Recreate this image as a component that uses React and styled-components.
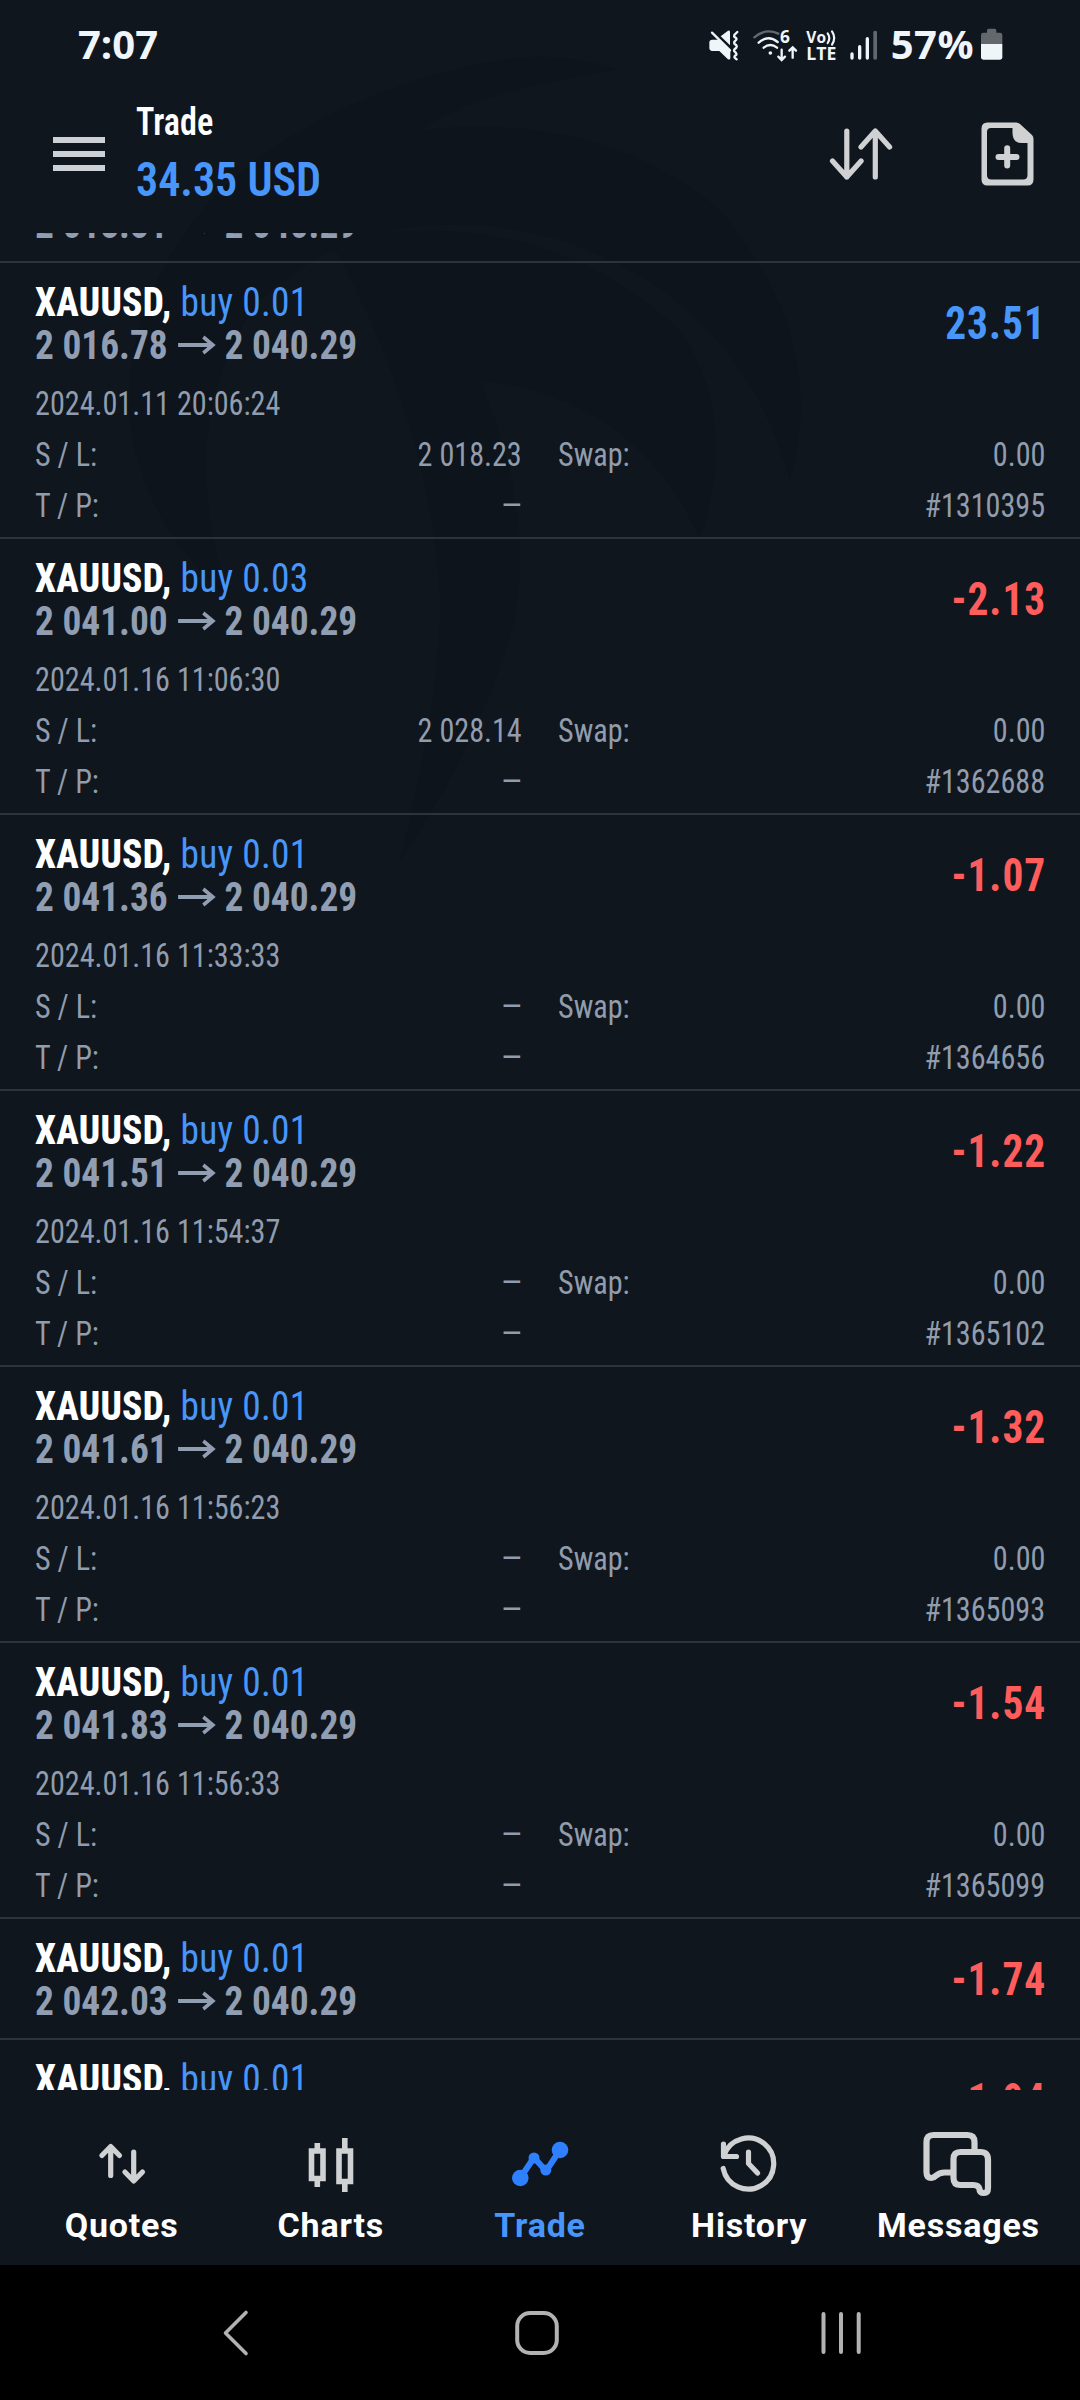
import React from 'react';
import styled, { createGlobalStyle } from 'styled-components';

const GlobalStyle = createGlobalStyle`
    * {
        box-sizing: border-box;
    }
    body {
        margin: 0;
        background: #0f161e;
    }
    svg {
        display: block;
        flex: none;
        overflow: visible;
    }
`;

const Screen = styled.div`
    position: relative;
    display: flex;
    flex-direction: column;
    width: 1080px;
    height: 2400px;
    overflow: hidden;
    background: #0f161e;
    color: #fff;
    font-family: Roboto, sans-serif;
    font-stretch: 75%;
`;

const Watermark = styled.svg`
    position: absolute;
    left: 0;
    top: 0;
    fill: #0b1118;
    opacity: 0.3;
`;

const StatusBar = styled.div`
    position: relative;
    display: flex;
    align-items: flex-start;
    height: 88px;
    padding: 27px 77px 0 78px;
    color: #f0f5fa;
    font-family: 'Open Sans', sans-serif;
    font-stretch: 100%;
`;

const StatusText = styled.div`
    font-size: 40px;
    font-weight: 700;
    line-height: 34px;
    letter-spacing: ${(p) => p.$spacing || 0}px;
`;

const StatusIcons = styled.div`
    display: flex;
    margin-left: auto;
`;

const Gap = styled.div`
    width: ${(p) => p.$w}px;
`;

const AppBar = styled.div`
    position: relative;
    display: flex;
    align-items: center;
    height: 132px;
    margin-bottom: 13px;
    padding: 0 46px 0 53px;
`;

const Burger = styled.div`
    display: grid;
    gap: 8px;
    width: 52px;
    margin-right: 31px;
`;

const BurgerLine = styled.div`
    height: 6px;
    background: #cdd0d4;
`;

const Titles = styled.div`
    flex: 1;
`;

const Narrow = styled.div`
    display: flex;
    align-items: center;
    white-space: pre;
    transform: scaleX(0.9);
    transform-origin: ${(p) => (p.$right ? 'right' : 'left')} center;
`;

const Title = styled(Narrow)`
    font-size: 38px;
    font-weight: 600;
    line-height: 45px;
    margin-bottom: 6px;
`;

const Balance = styled(Narrow)`
    color: #4996fb;
    font-size: 49px;
    font-weight: 600;
    line-height: 58px;
`;

const Actions = styled.div`
    display: flex;
    align-items: center;
    gap: 88px;
`;

const List = styled.div`
    position: relative;
    height: 1857px;
    overflow: hidden;
`;

const ListInner = styled.div`
    margin-top: -93px;
`;

const Row = styled.div`
    height: ${(p) => (p.$open ? 276 : 121)}px;
    border-top: 2px solid #2b333d;
    padding: 17px 35px 0;
`;

const RowHead = styled.div`
    display: flex;
    justify-content: space-between;
    height: 86px;
`;

const Symbol = styled(Narrow)`
    font-size: 41.5px;
    font-weight: 800;
    line-height: 43px;
    letter-spacing: 0.3px;
`;

const Side = styled.span`
    color: #4996fb;
    font-weight: 430;
`;

const Prices = styled(Symbol)`
    color: #919db1;
    font-weight: 700;
    letter-spacing: 0;
`;

const PriceArrow = styled.svg`
    margin: 0 10px 0 12px;
`;

const Profit = styled(Narrow)`
    height: 54px;
    margin: 16px -1px 0 0;
    color: ${(p) => (p.$loss ? '#ff5c5c' : '#4996fb')};
    font-size: 46px;
    font-weight: 700;
    line-height: 54px;
    letter-spacing: 1.1px;
`;

const Details = styled.div`
    display: grid;
    grid-template-columns: 487px 1fr;
    column-gap: 36px;
    margin-top: 12px;
    color: #919cad;
    font-size: 33.5px;
    line-height: 51px;
`;

const Cell = styled.div`
    display: flex;
    justify-content: ${(p) => (p.$end ? 'flex-end' : 'space-between')};
    height: 51px;
`;

const DateCell = styled(Cell)`
    grid-column: 1 / -1;
`;

const Tabs = styled.div`
    position: relative;
    display: grid;
    grid-template-columns: repeat(5, 1fr);
    height: 175px;
    padding: 39px 17px 0;
`;

const Tab = styled.div`
    display: flex;
    flex-direction: column;
    align-items: center;
    color: ${(p) => (p.$active ? '#4996fb' : '#fff')};
    font-size: 34px;
    font-weight: 700;
    font-stretch: 100%;
    line-height: 40px;
    letter-spacing: 0.8px;

    svg {
        margin-bottom: 6px;
    }
`;

const SystemNav = styled.div`
    position: relative;
    display: flex;
    align-items: center;
    height: 135px;
    padding: 0 219px;
    justify-content: space-between;
    background: #000;
`;

const trades = [
    { lot: '0.01', open: '2 018.51', profit: '21.78' },
    { lot: '0.01', open: '2 016.78', profit: '23.51', date: '2024.01.11 20:06:24', sl: '2 018.23', id: '#1310395' },
    { lot: '0.03', open: '2 041.00', profit: '-2.13', date: '2024.01.16 11:06:30', sl: '2 028.14', id: '#1362688' },
    { lot: '0.01', open: '2 041.36', profit: '-1.07', date: '2024.01.16 11:33:33', sl: '—', id: '#1364656' },
    { lot: '0.01', open: '2 041.51', profit: '-1.22', date: '2024.01.16 11:54:37', sl: '—', id: '#1365102' },
    { lot: '0.01', open: '2 041.61', profit: '-1.32', date: '2024.01.16 11:56:23', sl: '—', id: '#1365093' },
    { lot: '0.01', open: '2 041.83', profit: '-1.54', date: '2024.01.16 11:56:33', sl: '—', id: '#1365099' },
    { lot: '0.01', open: '2 042.03', profit: '-1.74' },
    { lot: '0.01', open: '2 042.23', profit: '-1.94' },
];

function Arrow() {
    return (
        <PriceArrow width="41" height="20" viewBox="0 0 41 20" fill="none" stroke="#919db1" strokeWidth="4">
            <path d="M0 10h38M28 2l10.500 8-10.500 8" />
        </PriceArrow>
    );
}

function Trade({ trade }) {
    return (
        <Row $open={!!trade.date}>
            <RowHead>
                <div>
                    <Symbol>XAUUSD, <Side>buy {trade.lot}</Side></Symbol>
                    <Prices>{trade.open}<Arrow />2 040.29</Prices>
                </div>
                <Profit $right $loss={trade.profit[0] === '-'}>{trade.profit}</Profit>
            </RowHead>
            {trade.date && (
                <Details>
                    <DateCell><Narrow>{trade.date}</Narrow></DateCell>
                    <Cell><Narrow>S / L:</Narrow><Narrow $right>{trade.sl}</Narrow></Cell>
                    <Cell><Narrow>Swap:</Narrow><Narrow $right>0.00</Narrow></Cell>
                    <Cell><Narrow>T / P:</Narrow><Narrow $right>—</Narrow></Cell>
                    <Cell $end><Narrow $right>{trade.id}</Narrow></Cell>
                </Details>
            )}
        </Row>
    );
}

function StatusGlyphs() {
    return (
        <>
            <svg width="32" height="35" viewBox="84 50 96 105" fill="currentColor">
                <path d="M122 78l22-17q6-2 6 4v40z" />
                <path d="M96 67l54 53" stroke="currentColor" strokeWidth="7" strokeLinecap="round" />
                <path d="M97 88h20l34 33v23q-1 6-8 2l-25-24H95q-7-1-7-8v-18q0-8 9-8z" />
                <path d="M172 65l-9 9q-2 4 2 7 8 4 2 9-7 5-3 11 9 5 5 11-9 6-6 11 8 6 6 10-8 5-5 9l6 5" fill="none" stroke="currentColor" strokeWidth="7" strokeLinecap="round" />
            </svg>
            <Gap $w={12} />
            <svg width="47" height="35" viewBox="216 50 141 105" fill="none" stroke="currentColor" strokeWidth="7" strokeLinecap="round">
                <path d="M223 81q34-29 72-11" stroke="#63686d" />
                <path d="M236 97q28-25 57-2M251 112q20-16 40 0" />
                <circle cx="271" cy="128" r="5.500" fill="currentColor" stroke="none" />
                <path d="M305 118v30M295 139l10 10 10-10M338 142v-28M328 121l10-10 10 10" strokeWidth="7" />
                <text x="300" y="97" fontSize="52" fontWeight="700" fill="currentColor" stroke="none">6</text>
            </svg>
            <Gap $w={7} />
            <svg width="31" height="35" viewBox="378 50 93 105" fill="currentColor" fontWeight="700">
                <text x="379" y="98" fontSize="48" textLength="59" lengthAdjust="spacingAndGlyphs">Vo</text>
                <text x="379" y="150" fontSize="52" textLength="90" lengthAdjust="spacingAndGlyphs">LTE</text>
                <path d="M443 69q10 14 0 29M456 63q13 19 0 40" fill="none" stroke="currentColor" strokeWidth="6.500" strokeLinecap="round" />
            </svg>
            <Gap $w={12} />
            <svg width="29" height="35" viewBox="507 50 87 105" fill="currentColor">
                <rect x="511" y="126" width="10" height="22" rx="5" />
                <rect x="534" y="104" width="10" height="44" rx="5" />
                <rect x="557" y="80" width="10" height="68" rx="5" />
                <rect x="580" y="61" width="11" height="87" rx="5" fill="#63686d" />
            </svg>
        </>
    );
}

function Battery() {
    return (
        <svg width="23" height="35" viewBox="900 50 69 105" fill="currentColor">
            <path d="M903 101V74q0-7 7-7h11V60q0-5 5-5h18q5 0 5 5v7h11q7 0 7 7v27z" fill="#63686d" />
            <path d="M903 101h64v40q0 7-7 7H910q-7 0-7-7z" />
        </svg>
    );
}

function SortIcon() {
    return (
        <svg width="64" height="58" viewBox="829 125 64 58" fill="none" stroke="#cfd1d3" strokeWidth="5.2" strokeLinecap="round" strokeLinejoin="round">
            <path d="M846.800 131v46M832.500 161l14.300 16 14.300-16M875.300 177v-46M861 147l14.300-16 14.300 16" />
        </svg>
    );
}

function NewOrderIcon() {
    return (
        <svg width="53" height="64" viewBox="981 122 53 64">
            <path fillRule="evenodd" fill="#cfd1d3" d="M987.500 122.500H1016Q1018.500 122.500 1020 124L1032 135Q1033.500 136.500 1033.500 139V179.500Q1033.500 185.500 1027.500 185.500H987.500Q981.500 185.500 981.500 179.500V128.500Q981.500 122.500 987.500 122.500ZM991 128Q987 128 987 132V175Q987 179.500 991.500 179.500H1023Q1027.500 179.500 1027.500 175V143H1022Q1012.500 143 1012.500 133V128Z" />
            <path d="M998.500 157h18M1007.200 148.300v17.200" stroke="#cfd1d3" strokeWidth="6" strokeLinecap="round" />
        </svg>
    );
}

function TabIcon({ name }) {
    const p = { height: 70, fill: 'none', stroke: '#cfd1d3', strokeLinecap: 'round', strokeLinejoin: 'round' };
    switch (name) {
        case 'Quotes':
            return (
                <svg {...p} width="60" viewBox="91.600 2129 60 70" strokeWidth="5.200">
                    <path d="M110.300 2175.500v-28M101.500 2155.500l8.800-9 8.800 9M133.300 2152v28M124.500 2172l8.800 9 8.800-9" />
                </svg>
            );
        case 'Charts':
            return (
                <svg {...p} width="60" viewBox="301 2129 60 70" strokeWidth="5.600" strokeLinecap="butt" strokeLinejoin="miter">
                    <path d="M311.500 2151h11.500v27.500h-11.500zM317.300 2143v8M317.300 2178.500v8.500M339 2151h11.500v30.500h-11.500zM344.800 2138v13M344.800 2181.500v10.500" />
                </svg>
            );
        case 'Trade':
            return (
                <svg {...p} width="60" viewBox="510 2129 60 70" stroke="#2f80ff" strokeWidth="6">
                    <path d="M520.300 2178l13.700-20.500 12 13.500 14-21" />
                    <circle cx="520.300" cy="2178" r="8.300" fill="#2f80ff" stroke="none" />
                    <circle cx="534" cy="2158" r="5.500" fill="#2f80ff" stroke="none" />
                    <circle cx="545.800" cy="2170" r="5.500" fill="#2f80ff" stroke="none" />
                    <circle cx="560" cy="2150" r="8.300" fill="#2f80ff" stroke="none" />
                </svg>
            );
        case 'History':
            return (
                <svg {...p} width="60" viewBox="719.300 2129 60 70" strokeWidth="5.200">
                    <path d="M723.500 2168.500A25.500 25.500 0 1 0 724.500 2155M723.800 2144v12.500h13M748.800 2152v11.500l9 9.500" />
                </svg>
            );
        default:
            return (
                <svg {...p} width="70" viewBox="923.500 2129 70 70" strokeWidth="6.200">
                    <path d="M975 2149v-7q0-7-7-7h-34q-7 0-7 7v30q0 6 5 6 2 0 4-2 4-3.500 9-3.500h7" />
                    <path d="M961 2152h20q7.500 0 7.500 7.500V2188q0 5-4 5-4.500 0-4.500-4-1-4-6-4H961q-7 0-7-7V2159q0-7 7-7z" />
                </svg>
            );
    }
}

export default function App() {
    return (
        <Screen>
            <GlobalStyle />
            <Watermark width="1080" height="900" viewBox="0 0 1080 900">
                <path d="M500 60Q330 90 220 190Q120 300 130 420Q140 520 230 600Q170 420 260 300Q380 190 560 240Q740 300 790 480Q830 340 720 210Q600 110 420 130Q480 90 620 70Q560 50 500 60Z" />
                <path d="M330 240Q540 200 680 330Q740 420 700 540Q640 400 480 380Q540 520 510 640Q470 760 400 860Q440 700 440 600Q430 420 330 240Z" />
            </Watermark>
            <StatusBar>
                <StatusText>7:07</StatusText>
                <StatusIcons>
                    <StatusGlyphs />
                    <Gap $w={13} />
                    <StatusText $spacing={0.5}>57%</StatusText>
                    <Gap $w={6} />
                    <Battery />
                </StatusIcons>
            </StatusBar>
            <AppBar>
                <Burger>
                    <BurgerLine />
                    <BurgerLine />
                    <BurgerLine />
                </Burger>
                <Titles>
                    <Title>Trade</Title>
                    <Balance>34.35 USD</Balance>
                </Titles>
                <Actions>
                    <SortIcon />
                    <NewOrderIcon />
                </Actions>
            </AppBar>
            <List>
                <ListInner>
                    {trades.map((trade) => <Trade key={trade.open} trade={trade} />)}
                </ListInner>
            </List>
            <Tabs>
                {['Quotes', 'Charts', 'Trade', 'History', 'Messages'].map((name) => (
                    <Tab key={name} $active={name === 'Trade'}>
                        <TabIcon name={name} />
                        {name}
                    </Tab>
                ))}
            </Tabs>
            <SystemNav>
                <svg width="34" height="48" viewBox="220 2309 34 48" fill="none" stroke="#b2b2b2" strokeWidth="3.600" strokeLinecap="round" strokeLinejoin="round">
                    <path d="M247 2312.500l-20.500 20.500 20.500 20.500" />
                </svg>
                <svg width="46" height="48" viewBox="515 2309 46 48" fill="none" stroke="#b2b2b2" strokeWidth="4">
                    <rect x="518.200" y="2313" width="39.600" height="40" rx="13" />
                </svg>
                <svg width="40" height="48" viewBox="821 2309 40 48" stroke="#b2b2b2" strokeWidth="4" strokeLinecap="round">
                    <path d="M823.500 2314v38M841 2314v38M858.700 2314v38" />
                </svg>
            </SystemNav>
        </Screen>
    );
}
